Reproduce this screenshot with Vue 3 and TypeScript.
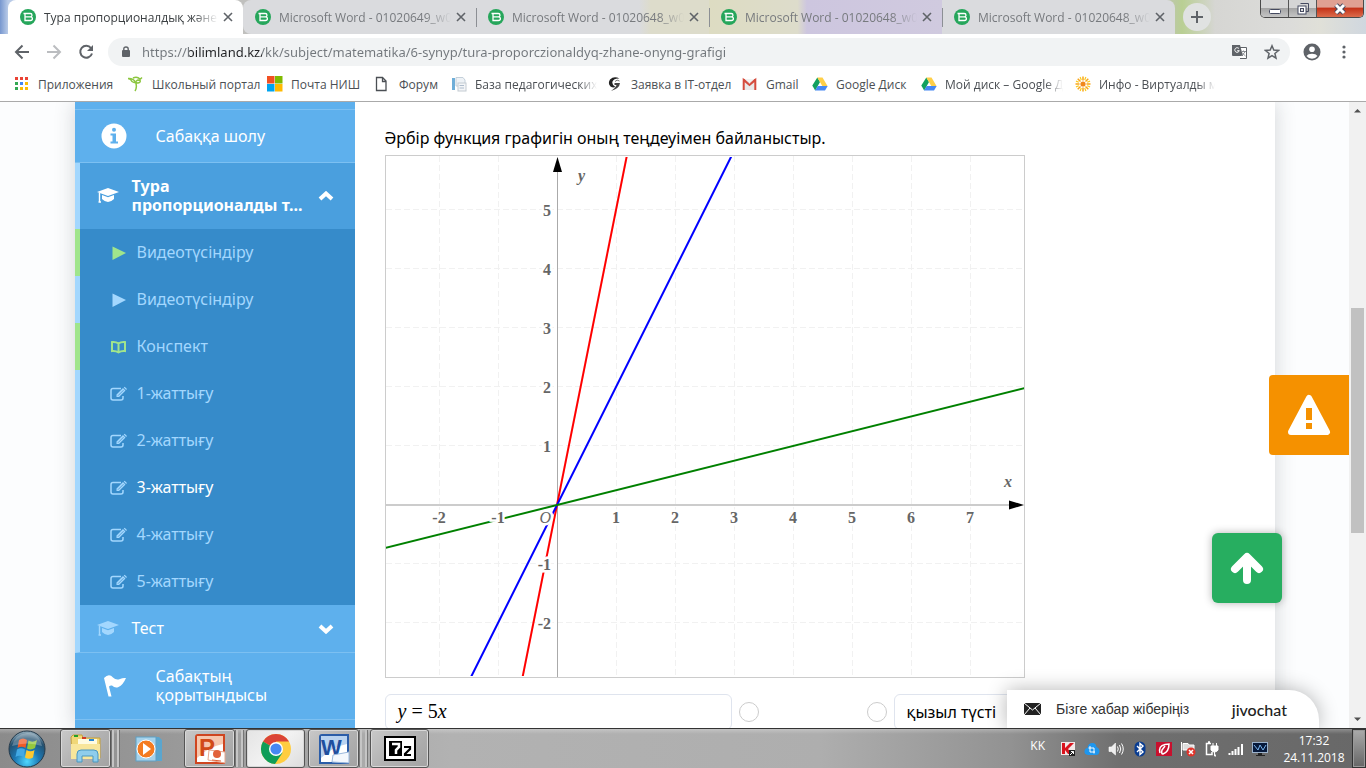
<script setup lang="ts">
import { ref } from 'vue'

interface Tab { title: string; active: boolean }
interface Bookmark { label: string; icon: string; fade?: boolean }
interface Lesson { label: string; icon: 'play' | 'book' | 'edit'; done: boolean }
interface Line { slope: number; color: string }

const tabs: Tab[] = [
  { title: 'Тура пропорционалдық және о', active: true },
  { title: 'Microsoft Word - 01020649_w01', active: false },
  { title: 'Microsoft Word - 01020648_w02', active: false },
  { title: 'Microsoft Word - 01020648_w02', active: false },
  { title: 'Microsoft Word - 01020648_w01', active: false },
]

const bookmarks: Bookmark[] = [
  { label: 'Приложения', icon: 'apps' },
  { label: 'Школьный портал', icon: 'palm' },
  { label: 'Почта НИШ', icon: 'ms' },
  { label: 'Форум', icon: 'page' },
  { label: 'База педагогических', icon: 'doc', fade: true },
  { label: 'Заявка в IT-отдел', icon: 'g' },
  { label: 'Gmail', icon: 'gmail' },
  { label: 'Google Диск', icon: 'drive' },
  { label: 'Мой диск – Google Д', icon: 'drive', fade: true },
  { label: 'Инфо - Виртуалды м', icon: 'sun', fade: true },
]

const lessons: Lesson[] = [
  { label: 'Видеотүсіндіру', icon: 'play', done: true },
  { label: 'Видеотүсіндіру', icon: 'play', done: false },
  { label: 'Конспект', icon: 'book', done: true },
  { label: '1-жаттығу', icon: 'edit', done: false },
  { label: '2-жаттығу', icon: 'edit', done: false },
  { label: '3-жаттығу', icon: 'edit', done: false },
  { label: '4-жаттығу', icon: 'edit', done: false },
  { label: '5-жаттығу', icon: 'edit', done: false },
]
const current = ref(5)
const url = ref('https://bilimland.kz/kk/subject/matematika/6-synyp/tura-proporczionaldyq-zhane-onyng-grafigi')

/* plot geometry */
const W = 640
const H = 523
const ox = 172
const oy = 350
const unit = 59
const px = (x: number) => ox + x * unit
const py = (y: number) => oy - y * unit
const xTicks = [-2, -1, 1, 2, 3, 4, 5, 6, 7]
const yTicks = [-2, -1, 1, 2, 3, 4, 5]
const lines: Line[] = [
  { slope: 5, color: '#f00' },
  { slope: 2, color: '#00f' },
  { slope: 0.25, color: '#008000' },
]
const rays = [0, 45, 90, 135, 180, 225, 270, 315]
</script>

<template>
  <div class="window">
    <header class="tabstrip">
      <div v-for="(t, i) in tabs" :key="i" class="tab" :class="{ active: t.active }">
        <svg class="fav" viewBox="0 0 16 16"><circle cx="8" cy="8" r="8" fill="#26a65b" /><path d="M3.500 4.500H10.200Q12 4.500 12 6.200Q12 7.900 10.200 7.900H5M10.400 7.900Q12.400 7.900 12.400 9.800Q12.400 11.500 10.400 11.500H5V5" fill="none" stroke="#fff" stroke-width="1.300" /></svg>
        <span class="tab-title">{{ t.title }}</span>
        <button class="tab-close" aria-label="Закрыть"><svg viewBox="0 0 10 10"><path d="M1 1L9 9M9 1L1 9" stroke="currentColor" stroke-width="1.600" /></svg></button>
      </div>
      <button class="newtab" aria-label="Новая вкладка"><svg viewBox="0 0 12 12"><path d="M6 0V12M0 6H12" stroke="#5f6368" stroke-width="2" /></svg></button>
      <div class="wincontrols">
        <button aria-label="Свернуть"><svg viewBox="0 0 14 12"><rect x="1.500" y="6.500" width="11" height="4" rx="1" fill="#fff" stroke="#454a60" /></svg></button>
        <button aria-label="Развернуть"><svg viewBox="0 0 14 12"><path d="M4.500 .5H12.500V8.500H10" fill="none" stroke="#454a60" /><rect x="2" y="3" width="8" height="8" fill="#fff" stroke="#454a60" /><rect x="4.500" y="5.500" width="3" height="3" fill="#ddd" stroke="#454a60" /></svg></button>
        <button class="shut" aria-label="Закрыть окно"><svg viewBox="0 0 14 12"><path d="M3 2L11 10M11 2L3 10" stroke="#454a60" stroke-width="5" /><path d="M3 2L11 10M11 2L3 10" stroke="#fff" stroke-width="3" /></svg></button>
      </div>
    </header>

    <div class="toolbar">
      <button class="nav" aria-label="Назад"><svg viewBox="0 0 16 16"><path d="M15 8H2M8.500 1.500L2 8L8.500 14.500" fill="none" stroke="#5f6368" stroke-width="2" /></svg></button>
      <button class="nav" aria-label="Вперёд"><svg viewBox="0 0 16 16"><path d="M1 8H14M7.500 1.500L14 8L7.500 14.500" fill="none" stroke="#bbbdc0" stroke-width="2" /></svg></button>
      <button class="nav" aria-label="Обновить"><svg viewBox="0 0 16 16"><path d="M13 4A6 6 0 1 0 14 9.500" fill="none" stroke="#5f6368" stroke-width="2" /><path d="M15 1V7H9Z" fill="#5f6368" /></svg></button>
      <label class="omnibox">
        <svg class="lock" viewBox="0 0 10 12"><rect x="1" y="4" width="8" height="7" rx="1" fill="#5f6368" /><path d="M2.800 5V3Q2.800 1 5 1T7.200 3V5" fill="none" stroke="#5f6368" stroke-width="1.400" /></svg>
        <input v-model="url" type="text" aria-label="Адрес" spellcheck="false">
        <svg class="translate" viewBox="0 0 16 16"><path d="M6 3.500H14.500V14.500H8" fill="#fff" stroke="#5f6368" /><path d="M0 1H8L11 12H1Q0 12 0 11Z" fill="#5f6368" /><path d="M7 4.700A2.300 2.300 0 1 0 7.300 6.700H5.200" fill="none" stroke="#fff" /><path d="M9 7.500H14M11.500 6.500V7.500M13 8L9.500 12M10.300 9L13.500 12" fill="none" stroke="#8b8f94" /></svg>
        <svg class="star" viewBox="0 0 16 16"><path d="M8 1.800L9.800 6.100L14.500 6.500L10.900 9.500L12 14.100L8 11.600L4 14.100L5.100 9.500L1.500 6.500L6.200 6.100Z" fill="none" stroke="#5f6368" stroke-width="1.500" /></svg>
      </label>
      <button class="avatar" aria-label="Профиль"><svg viewBox="0 0 18 18"><circle cx="9" cy="9" r="8.500" fill="#5f6368" /><circle cx="9" cy="6.300" r="2.800" fill="#fff" /><path d="M3.500 13Q5 10.700 9 10.700T14.500 13Q12.500 15.700 9 15.700T3.500 13Z" fill="#fff" /></svg></button>
      <button class="dots" aria-label="Меню"><svg viewBox="0 0 4 16"><circle cx="2" cy="3" r="1.600" fill="#5f6368" /><circle cx="2" cy="8" r="1.600" fill="#5f6368" /><circle cx="2" cy="13" r="1.600" fill="#5f6368" /></svg></button>
    </div>

    <nav class="bookmarks">
      <a v-for="(b, i) in bookmarks" :key="i" href="#">
        <svg v-if="b.icon === 'apps'" viewBox="0 0 16 16"><g fill="#ea4335"><rect x="1" y="1" width="3" height="3" /><rect x="6" y="1" width="3" height="3" /><rect x="11" y="1" width="3" height="3" /></g><rect x="1" y="6" width="3" height="3" fill="#34a853" /><rect x="6" y="6" width="3" height="3" fill="#4285f4" /><rect x="11" y="6" width="3" height="3" fill="#fbbc05" /><rect x="1" y="11" width="3" height="3" fill="#34a853" /><g fill="#fbbc05"><rect x="6" y="11" width="3" height="3" /><rect x="11" y="11" width="3" height="3" /></g></svg>
        <svg v-else-if="b.icon === 'palm'" viewBox="0 0 16 16"><path d="M7 15Q9.500 11 7.500 6M7.500 6Q5 2 0 2.500Q3 3 4 5.500Q6 7 7.500 6Q10 8 12 6Q13 4 10 4Q8 4.500 9 5.500M12 3Q9 0 5 2M12 3.500L14 1.500" fill="none" stroke="#8cc63f" stroke-width="1.500" /></svg>
        <svg v-else-if="b.icon === 'ms'" viewBox="0 0 16 16"><rect width="7.500" height="7.500" fill="#f25022" /><rect x="8" width="7.500" height="7.500" fill="#7fba00" /><rect y="8" width="7.500" height="7.500" fill="#00a4ef" /><rect x="8" y="8" width="7.500" height="7.500" fill="#ffb900" /></svg>
        <svg v-else-if="b.icon === 'page'" viewBox="0 0 16 16"><path d="M1.500 1.500H7.500L11 5V14.500H1.500ZM7.500 1.500V5.500H11" fill="none" stroke="#4b4f54" stroke-width="1.300" /></svg>
        <svg v-else-if="b.icon === 'doc'" viewBox="0 0 16 16"><rect x="1" y="2" width="3" height="12" fill="#6faed8" /><path d="M5 1.500H12L14 4V10H5Z" fill="#eef2f6" stroke="#c4d0da" /><rect x="7" y="7" width="8" height="8" fill="#f3f5f7" stroke="#c4cbd2" /><path d="M8.500 9.500H13M8.500 12H13" stroke="#aebccc" /></svg>
        <svg v-else-if="b.icon === 'g'" viewBox="0 0 16 16"><path d="M12.500 2.500Q7 -.5 3 3.500Q.5 7.500 3.500 10.500Q6 12 8.500 11Q4.500 9 5.500 5.500Q7 2 12.500 2.500Z" fill="#222" /><path d="M7.500 7H13Q12.500 12.500 4 15Q9 11.500 9.500 9H7.500Z" fill="#444" /><path d="M8 5.500Q10 3 12.500 5" stroke="#777" fill="none" /></svg>
        <svg v-else-if="b.icon === 'gmail'" viewBox="0 0 16 16"><path d="M1 3H14V14H1Z" fill="#e9e9e9" /><path d="M1.700 14V4L7.500 9L13.300 4V14" fill="none" stroke="#d54b3d" stroke-width="2" /><path d="M2 3L7.500 8L13 3" fill="#f2f2f2" stroke="#d54b3d" /></svg>
        <svg v-else-if="b.icon === 'drive'" viewBox="0 0 16 16"><path d="M5.300 1.500L8 6L3.200 14.500L.3 9.500Z" fill="#11a05f" /><path d="M5.300 1.500H10.500L15.500 10H10.300Z" fill="#ffcf48" /><path d="M5.700 10H15.700L13 14.500H3Z" fill="#4688f4" /></svg>
        <svg v-else viewBox="0 0 16 16"><g v-for="r in rays" :key="r" :transform="`rotate(${r} 8 8)`"><path d="M8 .5V4.500" stroke="#f9a51a" stroke-width="1.500" /><path d="M10.900 1L9.700 3.900" stroke="#fccb1b" stroke-width="1.200" /></g><circle cx="8" cy="8" r="2.600" fill="#f0881c" /></svg>
        <span :class="{ fade: b.fade }">{{ b.label }}</span>
      </a>
    </nav>

    <main class="viewport">
      <div class="canvas">
        <div class="shell">
          <aside class="sidebar">
            <a class="row top" href="#">
              <svg class="info" viewBox="0 0 26 26"><circle cx="13" cy="13" r="12.500" fill="#fff" /><circle cx="13" cy="6.800" r="2" fill="#5eb0ed" /><path d="M9.500 10.500H15V18.500H17V20.500H9.500V18.500H11.500V12.500H9.500Z" fill="#5eb0ed" /></svg>
              <span>Сабаққа шолу</span>
            </a>
            <button class="row head open">
              <svg class="cap" viewBox="0 0 22 16"><path d="M11 0L22 4L11 8L0 4Z" /><path d="M5 7L11 9.200L17 7V11Q14 14 11 14T5 11Z" /><path d="M2.500 5V14M1.500 14H4" stroke="currentColor" stroke-width="1.400" /></svg>
              <span>Тура пропорционалды т...</span>
              <svg class="chev" viewBox="0 0 16 10"><path d="M2 8L8 2.500L14 8" fill="none" stroke="#fff" stroke-width="4" /></svg>
            </button>
            <a v-for="(l, i) in lessons" :key="i" href="#" class="lesson" :class="{ done: l.done, current: i === current }" @click.prevent="current = i">
              <svg v-if="l.icon === 'play'" viewBox="0 0 16 16"><path d="M2 1.500L15.500 8L2 15Z" fill="currentColor" /></svg>
              <svg v-else-if="l.icon === 'book'" viewBox="0 0 16 16"><path d="M8 4.300Q5 2.500 1.500 3V12Q5 11.500 8 13.300Q11 11.500 14.500 12V3Q11 2.500 8 4.300V13" fill="none" stroke="currentColor" stroke-width="2" /></svg>
              <svg v-else viewBox="0 0 17 16"><path d="M11 2.500H3Q1 2.500 1 4.500V12Q1 14 3 14H11Q13 14 13 12V10" fill="none" stroke="currentColor" stroke-width="1.500" /><path d="M6.500 8.500L13 2L15.500 4.500L9 11H6.500Z M13.700 1.500L14.700 .7L17 2.900L16.100 3.900Z" fill="currentColor" /><path d="M8 9.700L13.500 4.200" stroke="#368bca" stroke-width=".7" /></svg>
              <span>{{ l.label }}</span>
            </a>
            <button class="row head">
              <svg class="cap" viewBox="0 0 22 16"><path d="M11 0L22 4L11 8L0 4Z" /><path d="M5 7L11 9.200L17 7V11Q14 14 11 14T5 11Z" /><path d="M2.500 5V14M1.500 14H4" stroke="currentColor" stroke-width="1.400" /></svg>
              <span>Тест</span>
              <svg class="chev" viewBox="0 0 16 10"><path d="M2 2L8 7.500L14 2" fill="none" stroke="#fff" stroke-width="4" /></svg>
            </button>
            <a class="row" href="#">
              <svg class="flag" viewBox="0 0 26 26"><path d="M3 5Q8 0 12 4.500Q15 7.500 19 6Q22 4.500 25 5Q22 12 17.500 14Q14 15.500 11 12.500Q9.500 12 8 13.500L10.500 23.500H7.500Z" fill="#fff" /></svg>
              <span>Сабақтың қорытындысы</span>
            </a>
          </aside>

          <article class="task">
            <p>Әрбір функция графигін оның теңдеуімен байланыстыр.</p>
            <svg class="plot" :viewBox="`0 0 ${W} ${H}`" role="img" aria-label="y = 5x, y = 2x, y = 0.25x">
              <defs><clipPath id="area"><rect x="1" y="2" :width="W - 2" :height="H - 4" /></clipPath></defs>
              <rect x=".5" y=".5" :width="W - 1" :height="H - 1" fill="#fff" stroke="#ccc" />
              <g stroke="#f1f1f1" stroke-dasharray="6 3">
                <line v-for="x in xTicks" :key="'x' + x" :x1="px(x) + 0.5" y1="1" :x2="px(x) + 0.5" :y2="H - 1" />
                <line v-for="y in yTicks" :key="'y' + y" x1="1" :y1="py(y) - 0.5" :x2="W - 1" :y2="py(y) - 0.5" />
              </g>
              <line x1="1" :y1="oy" :x2="W - 16" :y2="oy" stroke="#ccc" stroke-width="2" />
              <line :x1="ox + 0.5" y1="16" :x2="ox + 0.5" :y2="H - 1" stroke="#aaa" />
              <path :d="`M${ox + 0.5} 2L${ox + 5} 17H${ox - 4}Z`" />
              <path :d="`M${W - 1} ${oy}L${W - 16} ${oy - 4.500}V${oy + 4.500}Z`" />
              <g clip-path="url(#area)" stroke-width="2">
                <line v-for="l in lines" :key="l.slope" :x1="px(-3)" :y1="py(-3 * l.slope)" :x2="px(8)" :y2="py(8 * l.slope)" :stroke="l.color" />
              </g>
              <g class="ticks">
                <text v-for="x in xTicks" :key="'tx' + x" :x="px(x)" :y="oy + 18" text-anchor="middle">{{ x }}</text>
                <text v-for="y in yTicks" :key="'ty' + y" :x="ox - 6" :y="py(y) + 6" text-anchor="end">{{ y }}</text>
                <text class="it origin" :x="ox - 6" :y="oy + 18" text-anchor="end">O</text>
                <text class="it" x="193" y="26">y</text>
                <text class="it" x="619" y="332">x</text>
              </g>
            </svg>
            <div class="match">
              <div class="answer formula"><i>y</i> = 5<i>x</i></div>
              <input type="radio" name="left" aria-label="y = 5x">
              <input type="radio" name="right" aria-label="қызыл түсті">
              <div class="answer">қызыл түсті</div>
            </div>
          </article>
        </div>

        <button class="alert" aria-label="Қате туралы хабарлау"><svg viewBox="0 0 44 42"><path d="M22 4L40 38H4Z" fill="#fff" stroke="#fff" stroke-width="6" stroke-linejoin="round" /><path d="M19 14H25V26H19ZM19 29H25V35H19Z" fill="#f59100" /></svg></button>
        <button class="up" aria-label="Жоғары"><svg viewBox="0 0 34 32"><path d="M17 28V7M5 17L17 5L29 17" fill="none" stroke="#fff" stroke-width="8" stroke-linecap="round" stroke-linejoin="round" /></svg></button>
        <button class="chat">
          <svg viewBox="0 0 17 12"><rect width="17" height="12" fill="#222" /><path d="M0 0L8.500 7L17 0M0 12L6 5M17 12L11 5" fill="none" stroke="#fff" stroke-width="1" /></svg>
          <span>Бізге хабар жіберіңіз</span>
          <b>jivochat</b>
        </button>
      </div>
      <div class="scrollbar">
        <svg viewBox="0 0 17 17"><path d="M5 10.500L8.500 7L12 10.500Z" fill="#505050" /></svg>
        <div class="track"><div class="thumb"></div></div>
        <svg viewBox="0 0 17 17"><path d="M5 6.500L8.500 10L12 6.500Z" fill="#505050" /></svg>
      </div>
    </main>

    <footer class="taskbar">
      <button class="start" aria-label="Пуск">
        <svg viewBox="0 0 38 38"><defs><radialGradient id="orb" cx=".5" cy=".85" r=".85"><stop offset="0" stop-color="#4fd8ff" /><stop offset=".4" stop-color="#1c78b4" /><stop offset=".75" stop-color="#23506f" /><stop offset="1" stop-color="#9cb4c2" /></radialGradient></defs><circle cx="19" cy="19" r="18" fill="url(#orb)" stroke="#24394a" /><path d="M11 10Q15 7 19 10L17.500 18Q13.500 15.500 9.500 18Z" fill="#ef5a28" /><path d="M20.500 10.500Q24.500 13 29 10L27 18Q23 20.500 19 18.500Z" fill="#94c83d" /><path d="M9 19.500Q13 17 17 19.500L15.500 27Q11.500 24.500 7.500 27Z" fill="#42a9e4" /><path d="M18.500 20Q22.500 22.500 26.500 20L25 27.500Q21 30 17 27.500Z" fill="#fdc82f" /><path d="M4 16Q7 4 19 3T34 16Q19 11 4 16Z" fill="#fff" opacity=".25" /></svg>
      </button>
      <button class="app stack" aria-label="Проводник"><svg viewBox="0 0 36 34"><path d="M3 5L5 3H14L15 6H32V26H4Z" fill="#f0d777" stroke="#c39f3d" /><path d="M10 7H29V12H10Z" fill="#fffbe0" /><path d="M6 4H10" stroke="#23a127" stroke-width="2" /><path d="M14 6H18" stroke="#d33b24" stroke-width="2" /><path d="M21 8H26" stroke="#2786d5" stroke-width="2" /><path d="M3 12H32V27H3Z" fill="#f8e69b" /><path d="M9 30V22Q9 18 13 18H26Q30 18 30 22V30H25V24H14V30Z" fill="#8fcdec" stroke="#4a97c0" /></svg></button>
      <button class="app plain" aria-label="Проигрыватель"><svg viewBox="0 0 36 34"><path d="M8 5H29L32 8V29H12Z" fill="#5aa6cf" /><rect x="6" y="5" width="20" height="24" fill="#a5d2eb" stroke="#5f9fc4" /><circle cx="16" cy="17" r="9" fill="#f47b20" stroke="#fff" /><path d="M13 11L21 17L13 23Z" fill="#fff" /></svg></button>
      <button class="app stack" aria-label="PowerPoint"><svg viewBox="0 0 36 34"><path d="M4 5Q4 3 6 3H32V31H4Z" fill="#fff" stroke="#cf4520" stroke-width="2" /><path d="M5 4H31V12Q18 14 5 26Z" fill="#f7c6ad" /><text x="7" y="24" font-size="24" font-weight="700" fill="#d24a18">P</text><path d="M17 18L33 20V31L16 28Z" fill="#fff" stroke="#e5a78f" /><circle cx="25" cy="22" r="4" fill="#e2613a" /><path d="M20 28L29 29" stroke="#e2613a" /></svg></button>
      <button class="app hot" aria-label="Chrome"><svg viewBox="0 0 32 32"><circle cx="16" cy="16" r="15" fill="#ffcd40" /><path d="M16 16L3 8.500A15 15 0 0 1 29 8.500H16Z" fill="#db4437" /><path d="M3 8.500A15 15 0 0 0 15 31L22.500 19.700L16 16Z" fill="#0f9d58" /><circle cx="16" cy="16" r="7" fill="#fff" /><circle cx="16" cy="16" r="5.600" fill="#4688f4" /></svg></button>
      <button class="app stack" aria-label="Word"><svg viewBox="0 0 36 34"><path d="M4 5Q4 3 6 3H32V31H4Z" fill="#fff" stroke="#2b5da8" stroke-width="2" /><path d="M5 4H31V12Q18 14 5 26Z" fill="#b9d3f0" /><text x="5" y="23" font-size="22" font-weight="700" fill="#1f4f9e">W</text><path d="M17 23L33 20V31L16 30Z" fill="#f4f8fd" stroke="#9bb8dc" /></svg></button>
      <button class="app seven" aria-label="7-Zip"><svg viewBox="0 0 32 25"><rect x="1" y="1" width="30" height="23" fill="#fff" stroke="#000" stroke-width="2" /><rect x="5" y="5" width="13" height="15" /><path d="M8 8H15V11L12 14V18" fill="none" stroke="#fff" stroke-width="2.500" /><path d="M20 11H26V13L21 18V19H27" fill="none" stroke="#000" stroke-width="2.200" /></svg></button>

      <div class="tray">
        <span class="lang">KK</span>
        <svg viewBox="0 0 16 16"><rect x="1" y="1" width="14" height="13" fill="#f1e8e8" /><path d="M2 2H5V7L10 2H14L8 8L12 13H8L5 9V13H2Z" fill="#d9141e" /><rect x="9" y="9" width="6" height="6" fill="#222" /><path d="M10 14L13.500 10.500M11 10.500H13.500V13" stroke="#fff" fill="none" /></svg>
        <svg viewBox="0 0 16 16"><path d="M4 14Q0 13.500 .5 10Q1 7 3.500 7Q4 2 8.500 2Q12 2 12.500 6Q15.500 7 15.500 10.500Q15 14 12 14Z" fill="#1e96ee" /><path d="M6 5V11H11M4.500 7H10V12.500" fill="none" stroke="#fff" /></svg>
        <svg viewBox="0 0 16 16"><path d="M1 6H3.500L7.500 2V14L3.500 10.500H1Z" fill="#eee" stroke="#fff" stroke-width=".6" /><path d="M9.500 5.500Q11 8 9.500 10.500M11.500 4Q14 8 11.500 12M13.500 2.500Q17 8 13.500 13.500" fill="none" stroke="#fff" /></svg>
        <svg viewBox="0 0 16 16"><rect x="2.500" y=".5" width="11" height="15" rx="5.500" fill="#0a3d91" /><path d="M5 5L11 11L8 13.500V2.500L11 5L5 11" fill="none" stroke="#fff" stroke-width="1.400" /></svg>
        <svg viewBox="0 0 16 16"><rect y="1" width="16" height="14" fill="#c8102e" /><path d="M4 12Q2 5 9 3.500L13 3Q13 11 7 13Q5 13 6 9L9 5" fill="none" stroke="#fff" stroke-width="1.500" /></svg>
        <svg viewBox="0 0 16 16"><path d="M1.500 1V15M3 2.500H8L9 4H14V9H3Z" fill="#ddd" stroke="#fff" /><circle cx="11" cy="11" r="4.500" fill="#e0342b" /><path d="M9 9L13 13M13 9L9 13" stroke="#fff" stroke-width="1.500" /></svg>
        <svg viewBox="0 0 16 16"><path d="M7 2.500H2.500V13.500H8V11M4 1H6" fill="none" stroke="#fff" stroke-width="1.500" /><path d="M7 5H14V9Q13 11 10.500 11T7 9ZM9 2V5M12.500 2V5M10.500 11V15H12" fill="#fff" stroke="#fff" /></svg>
        <svg viewBox="0 0 16 16"><path d="M1.500 14V12M4.500 14V10M7.500 14V8M10.500 14V6M14 14V3" stroke="#fff" stroke-width="2" /></svg>
        <svg viewBox="0 0 16 16"><rect x=".5" y="1.500" width="15" height="10" fill="#071a3c" stroke="#9bb2cc" /><path d="M2 4L6 9L8 4L11 9L14 4" stroke="#79b5ee" fill="none" /><path d="M6 12H10V14H13V15H4V14H6Z" fill="#222" /></svg>
        <time class="clock">17:32<br>24.11.2018</time>
      </div>
      <button class="desk" aria-label="Рабочий стол"></button>
    </footer>
  </div>
</template>

<style>
body { margin: 0; overflow: hidden; }
</style>

<style scoped>
* { box-sizing: border-box; }
button { border: 0; padding: 0; margin: 0; background: none; font: inherit; color: inherit; cursor: pointer; display: flex; align-items: center; justify-content: center; }
a { color: inherit; text-decoration: none; }
svg { display: block; flex: none; }
.window { height: 100vh; display: flex; flex-direction: column; overflow: hidden; font-family: "Noto Sans", "Open Sans", sans-serif; background: #fff; }

.tabstrip { height: 34px; flex: none; display: flex; align-items: stretch; padding-left: 8px; font: 12px "Open Sans", sans-serif; background: linear-gradient(90deg, #7797cf 0, #b9cbe8 8px, #c0c0be 240px, #c0c0be 1160px, #b9cf93 1182px, #d6d6d3 1215px, #dcdcda 1290px, #e0e0d8 1320px, #d0d7df 100%); }
.tab { flex: 0 1 233px; min-width: 0; display: flex; align-items: center; padding: 0 10px 0 12px; background: #dadbde; color: #777a7e; position: relative; }
.tab:nth-child(3) { background: linear-gradient(90deg, #dadbde 70%, #dddccb 75%); }
.tab:nth-child(4) { background: linear-gradient(90deg, #dddcc2, #dddccb 38%, #cdc6df 42%, #d0cadf); }
.tab:nth-child(2) { border-radius: 8px 0 0 8px; }
.tab:nth-child(5) { border-radius: 0 8px 0 0; }
.tab:nth-child(n + 3)::before { content: ""; position: absolute; left: 0; top: 8px; width: 1px; height: 19px; background: #8c8f94; }
.tab.active { flex-basis: 235px; background: #fff; border-radius: 8px 8px 0 0; color: #3c4043; }
.fav { width: 16px; height: 16px; }
.tab-title { flex: 1; min-width: 0; margin: 0 5px 0 8px; white-space: nowrap; overflow: hidden; mask-image: linear-gradient(90deg, #000 85%, transparent); }
.tab-close svg { width: 10px; height: 10px; color: #5f6368; }
.newtab { width: 28px; height: 28px; margin: 3px 0 0 8px; border-radius: 50%; background: #e0e2e1; }
.newtab svg { width: 12px; height: 12px; }
.wincontrols { margin: 0 2px 0 auto; height: 18px; display: flex; border: 1px solid #4a4a4a; border-top: 0; border-radius: 0 0 5px 5px; overflow: hidden; }
.wincontrols button { width: 28px; background: linear-gradient(#d5d5d5 45%, #a5a5a5 50%, #c5c5c5); border-right: 1px solid #555; }
.wincontrols button.shut { width: 46px; border: 0; background: linear-gradient(#e0a092 40%, #c5341a 50%, #dc6c4c); }
.wincontrols svg { width: 14px; height: 12px; }

.toolbar { height: 36px; flex: none; display: flex; align-items: center; padding: 0 20px 0 14px; }
.nav { width: 16px; height: 16px; margin-right: 16px; }
.nav svg { width: 16px; height: 16px; }
.omnibox { flex: 1; height: 28px; border-radius: 14px; background: #f1f3f4; display: flex; align-items: center; padding: 0 10px 0 13px; margin-right: 13px; margin-left: -2px; }
.lock { width: 10px; height: 12px; margin-right: 11px; }
.omnibox input { flex: 1; min-width: 0; border: 0; outline: 0; padding: 0; height: 24px; font: 13px "Noto Sans", sans-serif; color: transparent; background: linear-gradient(90deg, #72777c 47px, #202124 47px, #202124 120px, #72777c 120px); -webkit-background-clip: text; background-clip: text; }
.translate { width: 16px; height: 16px; margin-right: 16px; }
.star { width: 16px; height: 16px; }
.avatar svg { width: 18px; height: 18px; }
.dots { margin-left: 21px; }
.dots svg { width: 4px; height: 16px; }

.bookmarks { height: 32px; flex: none; display: grid; grid-template-columns: 114px 139px 108px 76px 156px 135px 70px 109px 154px 146px; padding-left: 14px; border-bottom: 1px solid #aaa; align-items: center; font: 12px "Open Sans", sans-serif; color: #4b4f54; }
.bookmarks a { display: flex; align-items: center; min-width: 0; gap: 8px; padding-right: 6px; padding-bottom: 3px; white-space: nowrap; }
.bookmarks svg { width: 16px; height: 16px; }
.bookmarks span.fade { overflow: hidden; mask-image: linear-gradient(90deg, #000 85%, transparent); }

.viewport { flex: 1; min-height: 0; display: flex; }
.canvas { flex: 1; min-width: 0; position: relative; overflow: hidden; background: #fcfdfe; display: flex; justify-content: center; }
.shell { width: 100%; max-width: 1200px; display: flex; background: #fff; box-shadow: 0 0 20px rgba(40, 50, 60, .2); }
.sidebar { width: 280px; flex: none; display: flex; flex-direction: column; background: #5eb0ed; color: #fff; font-size: 16px; line-height: 19px; padding-top: 7px; }
.row { flex: none; display: flex; align-items: center; border-bottom: 1px solid #7cc0f2; padding: 14px 30px 14px 26px; text-align: left; }
.row.top { border-top: 1px solid #7cc0f2; padding-top: 13px; padding-bottom: 13px; }
.row span { flex: 1; }
.row .info, .row .flag { width: 26px; height: 26px; margin-right: 29px; }
.row.head { min-height: 48px; border-left: 5px solid #a3d7fe; padding: 0 21px 0 17px; }
.row.head span { padding-right: 8px; }
.row.head.open { background: #4a9fde; min-height: 66px; border-bottom: 0; font-weight: 700; }
.cap { width: 22px; height: 16px; margin-right: 13px; color: #a3d7fe; fill: currentColor; }
.open .cap { color: #fff; }
.chev { width: 16px; height: 10px; }
.lesson { flex: none; height: 47px; display: flex; align-items: center; background: #368bca; border-left: 5px solid #a3d7fe; padding-left: 30px; color: #a3d7fe; }
.lesson svg { width: 17px; height: 16px; margin-right: 10px; }
.lesson.done { border-color: #a0e58c; }
.lesson.done svg { color: #a0e58c; }
.lesson.current span { color: #fff; }

.task { flex: 1; min-width: 0; padding: 24px 30px 0; }
.task p { margin: 0 0 5px; font-size: 16px; line-height: 24px; color: #000; }
.plot { width: 100%; max-width: 640px; height: auto; }
.ticks { font: 700 16px "Liberation Serif", serif; fill: #666; stroke: #fff; stroke-width: 5px; paint-order: stroke; }
.it { font-style: italic; }
.origin { font-weight: 400; }
.match { display: flex; align-items: center; margin-top: 16px; gap: 7px; }
.answer { flex: 0 1 347px; height: 36px; border: 1px solid #dfe4ee; border-radius: 6px; padding: 0 12px; font-size: 16px; line-height: 34px; color: #000; }
.formula { font: 20px/32px "Liberation Serif", serif; }
.match input { appearance: none; width: 20px; height: 20px; margin: 0; border: 1px solid #ccc; border-radius: 50%; background: #fff; flex: none; }
.match input + input { margin-left: 101px; }

.alert { position: absolute; right: 0; top: 273px; width: 80px; height: 80px; background: #f59100; border-radius: 4px 0 0 4px; }
.alert svg { width: 44px; height: 42px; }
.up { position: absolute; right: 67px; top: 431px; width: 70px; height: 70px; background: #27ae60; border-radius: 6px; box-shadow: 0 0 8px rgba(0, 0, 0, .3); }
.up svg { width: 34px; height: 32px; }
.chat { position: absolute; right: 30px; bottom: 0; width: 312px; height: 38px; background: #fff; border-radius: 0 30px 0 0; box-shadow: 0 0 20px rgba(0, 0, 0, .3); justify-content: flex-start; padding: 0 32px 0 17px; font: 14px "Liberation Sans", sans-serif; color: #333; }
.chat svg { width: 17px; height: 12px; margin-right: 15px; }
.chat span { flex: 1; text-align: left; }
.chat b { font: 500 16px Lato, sans-serif; color: #222; }

.scrollbar { width: 17px; flex: none; display: flex; flex-direction: column; background: #f1f1f1; }
.scrollbar svg { width: 17px; height: 17px; }
.track { flex: 1; padding: 189px 2px 0; }
.thumb { height: 225px; background: #c1c1c1; }

.taskbar { height: 40px; flex: none; display: flex; align-items: stretch; border-top: 1px solid #333; background: linear-gradient(rgba(255, 255, 255, .25), transparent 5px), linear-gradient(90deg, #8b8b8b, #989898 12%, #b2b2b2 33%, #aeaeae 60%, #929292 74%, #6f6f6f 82%, #686868); }
.start { width: 38px; margin: 0 14px 0 8px; }
.start svg { width: 38px; height: 38px; }
.app { width: 51px; border: 1px solid #555; border-radius: 3px; background: linear-gradient(135deg, #c9c9c9, #b2b2b2 50%, #a2a2a2); box-shadow: inset 0 0 0 1px #d8d8d8; margin-right: 11px; position: relative; }
.app svg { width: 36px; height: 34px; font-family: "Liberation Sans", sans-serif; }
.app.stack::after { content: ""; position: absolute; left: 50px; top: 0; bottom: 0; width: 7px; border: solid #777; border-width: 0 1px; box-shadow: inset 2px 0 #c5c5c5, inset -2px 0 #c5c5c5; }
.app.plain { background: none; border-color: transparent; box-shadow: none; }
.app.hot { width: 59px; background: linear-gradient(135deg, #e4e4e4, #f2f2f2 50%, #ddd); margin-right: 3px; }
.app.hot svg { width: 32px; height: 32px; }
.app.seven { width: 59px; }
.app.seven svg { width: 32px; height: 25px; }
.tray { margin-left: auto; display: flex; align-items: center; gap: 8px; color: #fff; font: 12px "Open Sans", sans-serif; }
.tray svg { width: 16px; height: 16px; }
.lang { margin: 0 7px 6px 0; }
.clock { width: 74px; margin: 0 1px; line-height: 17px; text-align: center; white-space: nowrap; }
.desk { width: 14px; border: 1px solid #333; background: linear-gradient(#aaa, #666); box-shadow: inset 0 0 0 1px #999; }
</style>
